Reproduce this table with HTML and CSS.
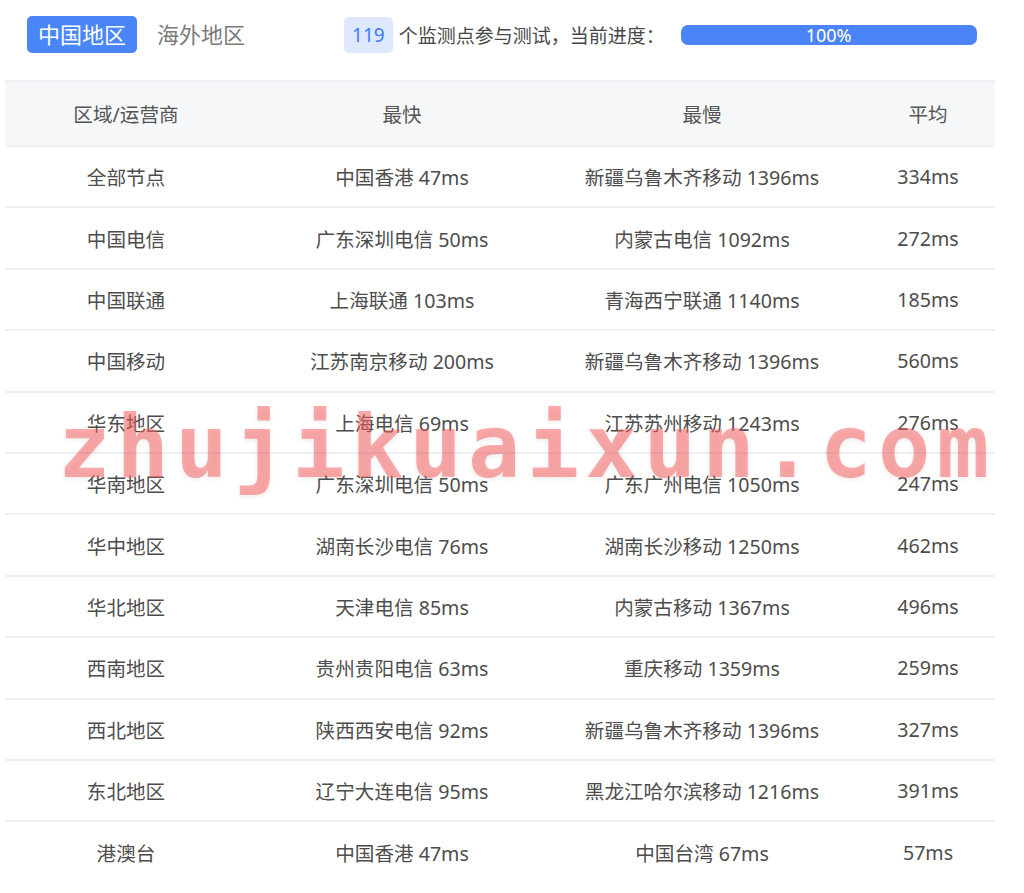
FILE: index.html
```html
<!DOCTYPE html>
<html lang="zh-CN">
<head>
  <meta charset="UTF-8" />
  <title>监测结果</title>
  <link rel="stylesheet" href="styles.css">
</head>
<body>
  <div class="page">
    <div class="topbar">
      <div class="tabs">
        <span class="tab active">中国地区</span>
        <span class="tab">海外地区</span>
      </div>
      <div class="status">
        <span class="badge">119</span>
        <span class="status-text">个监测点参与测试，当前进度：</span>
        <div class="progress"><div class="progress-bar" style="width:100%">100%</div></div>
      </div>
    </div>

    <div class="table">
      <div class="row head">
        <div class="cell">区域/运营商</div>
        <div class="cell">最快</div>
        <div class="cell">最慢</div>
        <div class="cell avg">平均</div>
      </div>
      <div class="row">
        <div class="cell">全部节点</div>
        <div class="cell">中国香港 47ms</div>
        <div class="cell">新疆乌鲁木齐移动 1396ms</div>
        <div class="cell avg">334ms</div>
      </div>
      <div class="row">
        <div class="cell">中国电信</div>
        <div class="cell">广东深圳电信 50ms</div>
        <div class="cell">内蒙古电信 1092ms</div>
        <div class="cell avg">272ms</div>
      </div>
      <div class="row">
        <div class="cell">中国联通</div>
        <div class="cell">上海联通 103ms</div>
        <div class="cell">青海西宁联通 1140ms</div>
        <div class="cell avg">185ms</div>
      </div>
      <div class="row">
        <div class="cell">中国移动</div>
        <div class="cell">江苏南京移动 200ms</div>
        <div class="cell">新疆乌鲁木齐移动 1396ms</div>
        <div class="cell avg">560ms</div>
      </div>
      <div class="row">
        <div class="cell">华东地区</div>
        <div class="cell">上海电信 69ms</div>
        <div class="cell">江苏苏州移动 1243ms</div>
        <div class="cell avg">276ms</div>
      </div>
      <div class="row">
        <div class="cell">华南地区</div>
        <div class="cell">广东深圳电信 50ms</div>
        <div class="cell">广东广州电信 1050ms</div>
        <div class="cell avg">247ms</div>
      </div>
      <div class="row">
        <div class="cell">华中地区</div>
        <div class="cell">湖南长沙电信 76ms</div>
        <div class="cell">湖南长沙移动 1250ms</div>
        <div class="cell avg">462ms</div>
      </div>
      <div class="row">
        <div class="cell">华北地区</div>
        <div class="cell">天津电信 85ms</div>
        <div class="cell">内蒙古移动 1367ms</div>
        <div class="cell avg">496ms</div>
      </div>
      <div class="row">
        <div class="cell">西南地区</div>
        <div class="cell">贵州贵阳电信 63ms</div>
        <div class="cell">重庆移动 1359ms</div>
        <div class="cell avg">259ms</div>
      </div>
      <div class="row">
        <div class="cell">西北地区</div>
        <div class="cell">陕西西安电信 92ms</div>
        <div class="cell">新疆乌鲁木齐移动 1396ms</div>
        <div class="cell avg">327ms</div>
      </div>
      <div class="row">
        <div class="cell">东北地区</div>
        <div class="cell">辽宁大连电信 95ms</div>
        <div class="cell">黑龙江哈尔滨移动 1216ms</div>
        <div class="cell avg">391ms</div>
      </div>
      <div class="row last">
        <div class="cell">港澳台</div>
        <div class="cell">中国香港 47ms</div>
        <div class="cell">中国台湾 67ms</div>
        <div class="cell avg">57ms</div>
      </div>
    </div>

    <div class="watermark">zhujikuaixun.com</div>
  </div>
</body>
</html>
```

FILE: styles.css
```css
/* Base */
*, *::before, *::after {
  box-sizing: border-box;
}
body {
  margin: 0;
  background: #fff;
  font-family: "Noto Sans", "Noto Sans CJK SC", sans-serif;
  color: #4d4d4d;
}
.page {
  position: relative;
  width: 1024px;
  height: 893px;
  overflow: hidden;
}

/* Top bar */
.topbar {
  display: flex;
  align-items: center;
  height: 37px;
  margin-top: 16px;
  padding-left: 27px;
}
.tabs {
  display: flex;
  align-items: center;
  gap: 9px;
}
.tab {
  display: inline-block;
  height: 37px;
  line-height: 37px;
  padding: 0 11px;
  font-size: 22px;
  color: #7a7a7a;
  border-radius: 5px;
}
.tab.active {
  background: #4a86f7;
  color: #fff;
}
.status {
  display: flex;
  align-items: center;
  margin-left: 88px;
}
.badge {
  display: inline-block;
  height: 36px;
  line-height: 36px;
  padding: 0 8px;
  background: #dde8fd;
  color: #3d7cf2;
  font-size: 19px;
  border-radius: 5px;
}
.status-text {
  margin-left: 6px;
  font-size: 19px;
  color: #474747;
}
.progress {
  width: 296px;
  height: 20px;
  margin-left: 16px;
  border-radius: 7px;
  background: #e8eef8;
  overflow: hidden;
}
.progress-bar {
  height: 100%;
  background: #4b84f6;
  color: #fff;
  font-size: 18px;
  line-height: 20px;
  text-align: center;
}

/* Table */
.table {
  width: 990px;
  margin: 27px 0 0 5px;
}
.row {
  display: grid;
  grid-template-columns: 242px 310px 290px 148px;
  height: 61.4px;
  border-bottom: 2px solid #edf0f5;
  font-size: 19.6px;
}
.row.head {
  height: 67px;
  border-top: 2px solid #edf0f5;
  background: #f6f7f8;
  color: #555;
}
.row.last {
  border-bottom: none;
}
.cell {
  display: flex;
  align-items: center;
  justify-content: center;
  white-space: nowrap;
}
.cell.avg {
  padding-left: 14px;
}

/* Watermark over the table */
.watermark {
  position: absolute;
  left: 58px;
  top: 404px;
  font-family: "DejaVu Sans Mono", monospace;
  font-weight: bold;
  font-size: 87px;
  line-height: 1;
  letter-spacing: 6.2px;
  color: rgba(250, 92, 92, 0.52);
  text-shadow: 0 2px 5px rgba(0, 0, 0, 0.07);
  white-space: nowrap;
  pointer-events: none;
}
```
